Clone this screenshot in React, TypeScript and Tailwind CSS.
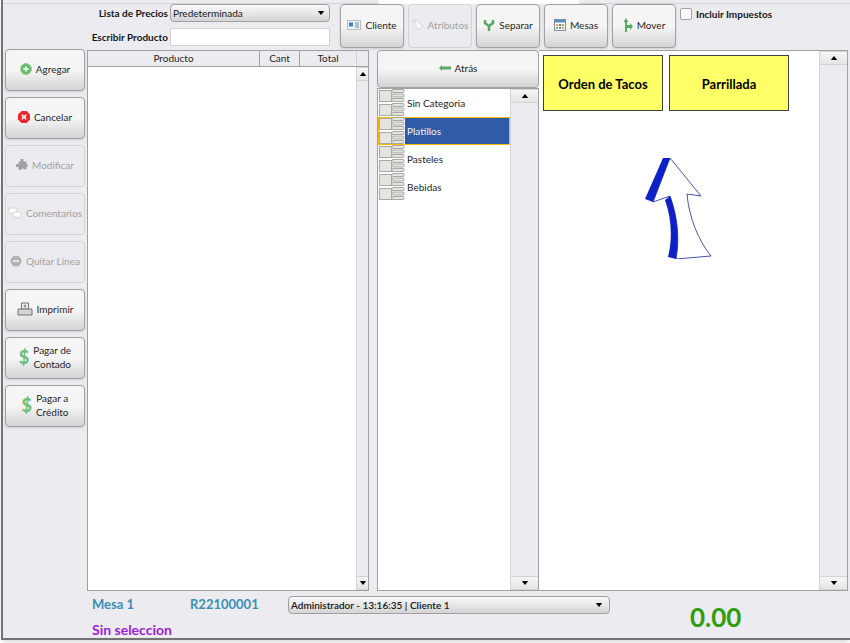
import { ReactNode } from 'react';

function Arrow({ up }: { up?: boolean }) {
  return (
    <svg viewBox="0 0 8 5" className="h-1 w-2 fill-black">
      <path d={up ? 'M0 5 L4 0 L8 5 Z' : 'M0 0 L8 0 L4 5 Z'} />
    </svg>
  );
}

function ScrollBar({ wide }: { wide?: boolean }) {
  const btn = 'flex h-3.5 items-center justify-center bg-gradient-to-b from-neutral-100 to-neutral-200 border-y border-neutral-300';
  return (
    <div className={`flex shrink-0 flex-col justify-between border-l border-neutral-300 bg-[#ecebef] ${wide ? 'w-7' : 'w-3'}`}>
      <div className={btn}>
        <Arrow up />
      </div>
      <div className={btn}>
        <Arrow />
      </div>
    </div>
  );
}

function Dollar() {
  return <span className="text-lg font-black leading-none text-[#6ec07a]">$</span>;
}

const icons: Record<string, ReactNode> = {
  agregar: (
    <svg viewBox="0 0 12 12" className="size-3">
      <circle cx="6" cy="6" r="5.5" fill="#66bb6a" stroke="#9ccc9c" />
      <path d="M6 3.2v5.6M3.2 6h5.6" stroke="#fff" strokeWidth="1.4" />
    </svg>
  ),
  cancelar: (
    <svg viewBox="0 0 12 12" className="size-3">
      <path d="M3.5 0h5L12 3.5v5L8.5 12h-5L0 8.5v-5Z" fill="#e8272f" />
      <path d="M3.8 3.8l4.4 4.4M8.2 3.8l-4.4 4.4" stroke="#fff" strokeWidth="1.6" />
    </svg>
  ),
  modificar: (
    <svg viewBox="0 0 12 12" className="size-3 fill-neutral-400">
      <path d="M4.5 1a1.5 1.5 0 0 1 3 0V2.500h3v3H12v2h-1.500v3h-3V9.500h-2V11H2.500V8H1a1.500 1.500 0 0 1 0-3h1.500V2.500h2Z" />
    </svg>
  ),
  comentarios: (
    <svg viewBox="0 0 14 12" className="h-3 w-3.5 fill-white stroke-neutral-300">
      <path d="M1 1h7a1 1 0 0 1 1 1v3a1 1 0 0 1-1 1H4L2 8V6H1Z" />
      <path d="M6 5h6a1 1 0 0 1 1 1v3a1 1 0 0 1-1 1h-1v1.500L9 10H6a1 1 0 0 1-1-1V6Z" />
    </svg>
  ),
  quitar: (
    <svg viewBox="0 0 12 12" className="size-3">
      <circle cx="6" cy="6" r="5.500" fill="#b4b4b6" />
      <path d="M3 6h6" stroke="#eee" strokeWidth="1.800" />
    </svg>
  ),
  imprimir: (
    <svg viewBox="0 0 16 14" className="h-3.5 w-4 fill-neutral-100 stroke-neutral-500">
      <path d="M4.500 1h7v6h-7Z" />
      <path d="M1 7h14v6H1Z" fill="#d4d4d8" />
      <path d="M8 2.500v3M6.500 4h3" />
    </svg>
  ),
  cliente: (
    <svg viewBox="0 0 14 10" className="h-2.5 w-3.5">
      <rect x="0.500" y="0.500" width="13" height="9" fill="#eef2f7" stroke="#b6bcc6" />
      <rect x="2" y="2.500" width="4" height="4" fill="#3f7fc4" />
      <path d="M8 3h4M8 5h4M8 7h4" stroke="#7a8290" />
    </svg>
  ),
  atributos: (
    <svg viewBox="0 0 12 12" className="size-3 fill-neutral-100 stroke-neutral-300">
      <path d="M1 1h4l6 6-4 4-6-6Z" />
      <circle cx="3.200" cy="3.200" r="0.800" />
    </svg>
  ),
  separar: (
    <svg viewBox="0 0 12 12" className="size-3 fill-none stroke-[#5aa864]" strokeWidth="2.500">
      <path d="M6 12V7L2 4V1M6 7l4-3V1" />
    </svg>
  ),
  mesas: (
    <svg viewBox="0 0 12 12" className="size-3">
      <rect x="0.500" y="0.500" width="11" height="11" fill="#fff" stroke="#7c8aa0" />
      <path d="M1 1h10v2.500H1Z" fill="#5a8fd0" />
      <path d="M2 5h2v2H2Z" fill="#e8a33d" />
      <path d="M5 5h2v2H5Z" fill="#d9534f" />
      <path d="M8 5h2v2H8Z" fill="#6fbf73" />
      <path d="M2 8h2v2H2Z" fill="#6fbf73" />
      <path d="M5 8h2v2H5Z" fill="#5a8fd0" />
      <path d="M8 8h2v2H8Z" fill="#e8a33d" />
    </svg>
  ),
  mover: (
    <svg viewBox="0 0 10 14" className="h-3.5 w-2.500 fill-[#5aa864]">
      <path d="M2 14V4H0.500L3 0l2.500 4H4v3h3V5l3 3.500L7 12v-2H4v4Z" />
    </svg>
  ),
};

type BtnProps = { icon: ReactNode; disabled?: boolean; children: ReactNode; size: string };

function Btn({ icon, disabled, children, size }: BtnProps) {
  return (
    <button
      className={`flex items-center justify-center gap-1 rounded-sm border pb-0.5 text-center leading-3.5 ${size} ${
        disabled
          ? 'border-neutral-300 text-neutral-400'
          : 'border-neutral-400 bg-gradient-to-b from-neutral-100 via-neutral-100 to-neutral-300 text-neutral-800 shadow-sm'
      }`}
    >
      {icon}
      <span>{children}</span>
    </button>
  );
}

function CategoryIcon() {
  return (
    <svg viewBox="0 0 26 28" className="h-7 w-6.5 shrink-0">
      {[1, 15].map((y) => (
        <g key={y} fill="#e4e4e0" stroke="#a8a8a4">
          <rect x="0.500" y={y + 0.500} width="12" height="11" />
          <rect x="13" y={y - 0.500} width="12" height="3" rx="1" />
          <rect x="13" y={y + 4} width="12" height="3" rx="1" />
          <rect x="13" y={y + 8.500} width="12" height="3" rx="1" />
        </g>
      ))}
    </svg>
  );
}

const categories = ['Sin Categoria', 'Platillos', 'Pasteles', 'Bebidas'];

export default function App() {
  return (
    <div
      className="h-[643px] w-[850px] overflow-hidden bg-white text-[10px]"
      style={{ fontFamily: 'Lato, "Open Sans", sans-serif' }}
    >
      <div className="ml-px flex h-[640px] flex-col border-b-2 border-l-2 border-neutral-500 bg-[#ecebef] shadow-md">
        {/* strip of the tabs above */}
        <div className="flex h-1 shrink-0 border-b border-neutral-300">
          <div className="w-94" />
          <div className="-mb-px w-50 bg-white" />
        </div>

        {/* top bar */}
        <div className="flex h-11 shrink-0">
          <div className="flex w-[327px] shrink-0 flex-col items-end gap-1.5">
            <div className="flex items-center gap-0.5">
              <span className="font-bold text-neutral-900">Lista de Precios</span>
              <div className="flex h-4.5 w-40 items-center justify-between rounded-sm border border-neutral-400 bg-gradient-to-b from-neutral-50 to-neutral-300 pl-0.5 pr-1 text-neutral-900">
                Predeterminada
                <Arrow />
              </div>
            </div>
            <div className="flex items-center gap-0.5">
              <span className="font-bold text-neutral-900">Escribir Producto</span>
              <div className="h-4.5 w-40 border border-neutral-300 bg-white" />
            </div>
          </div>
          <div className="ml-2.5 flex gap-1">
            <Btn size="h-11 w-16" icon={icons.cliente}>Cliente</Btn>
            <Btn size="h-11 w-16" icon={icons.atributos} disabled>
              Atributos
            </Btn>
            <Btn size="h-11 w-16" icon={icons.separar}>Separar</Btn>
            <Btn size="h-11 w-16" icon={icons.mesas}>Mesas</Btn>
            <Btn size="h-11 w-16" icon={icons.mover}>Mover</Btn>
          </div>
          <label className="ml-1 flex h-5 items-center gap-1 font-bold text-neutral-900">
            <span className="size-3 rounded-xs border border-neutral-400 bg-neutral-50" />
            Incluir Impuestos
          </label>
        </div>

        {/* main area */}
        <div className="flex min-h-0 flex-1 pb-px pr-0.5 pt-px">
          <div className="ml-0.5 flex w-20 shrink-0 flex-col gap-1.5">
            <Btn size="h-10.5" icon={icons.agregar}>Agregar</Btn>
            <Btn size="h-10.5" icon={icons.cancelar}>Cancelar</Btn>
            <Btn size="h-10.5" icon={icons.modificar} disabled>
              Modificar
            </Btn>
            <Btn size="h-10.5" icon={icons.comentarios} disabled>
              Comentarios
            </Btn>
            <Btn size="h-10.5" icon={icons.quitar} disabled>
              Quitar Linea
            </Btn>
            <Btn size="h-10.5" icon={icons.imprimir}>Imprimir</Btn>
            <Btn size="h-10.5" icon={<Dollar />}>
              Pagar de
              <br />
              Contado
            </Btn>
            <Btn size="h-10.5" icon={<Dollar />}>
              Pagar a
              <br />
              Crédito
            </Btn>
          </div>

          {/* order table */}
          <div className="ml-0.5 mt-px flex w-[282px] shrink-0 flex-col border border-neutral-400 bg-white">
            <div className="flex h-4 shrink-0 border-b border-neutral-400 bg-[#ecebef] text-neutral-800">
              <div className="flex flex-1 items-center justify-center border-r border-neutral-400">Producto</div>
              <div className="flex w-10 items-center justify-center border-r border-neutral-400">Cant</div>
              <div className="flex w-14 items-center justify-center">Total</div>
              <div className="w-3 border-l border-neutral-300" />
            </div>
            <div className="flex min-h-0 flex-1 justify-end">
              <ScrollBar />
            </div>
          </div>

          {/* categories */}
          <div className="ml-2 mt-px flex w-[162px] shrink-0 flex-col">
            <button className="flex h-9.5 shrink-0 items-center justify-center gap-1 rounded-sm border border-neutral-400 bg-gradient-to-b from-neutral-100 via-neutral-100 to-neutral-300 pb-0.5 text-neutral-800">
              <svg viewBox="0 0 12 6" className="h-1.5 w-3 fill-[#5aa864]">
                <path d="M0 3 L3 0 V1.500 H12 V4.500 H3 V6 Z" />
              </svg>
              Atrás
            </button>
            <div className="flex min-h-0 flex-1 border border-neutral-400 bg-white">
              <div className="flex min-w-0 flex-1 flex-col">
                {categories.map((c) => (
                  <div
                    key={c}
                    className={`flex h-7 items-center border text-neutral-800 ${
                      c === 'Platillos' ? 'border-amber-400' : 'border-transparent'
                    }`}
                  >
                    <CategoryIcon />
                    <span
                      className={`flex h-full flex-1 items-center px-0.5 ${
                        c === 'Platillos' ? 'bg-[#2f5ba7] text-neutral-100' : ''
                      }`}
                    >
                      {c}
                    </span>
                  </div>
                ))}
              </div>
              <ScrollBar wide />
            </div>
          </div>

          {/* products */}
          <div className="mt-px flex min-w-0 flex-1 border-y border-r border-neutral-400 bg-white">
            <div className="flex-1 p-1">
              <div className="flex gap-1.5">
                <div className="flex h-14 w-30 items-center justify-center border border-neutral-700 bg-[#ffff66] pt-1 text-[13px] font-bold text-black">
                  Orden de Tacos
                </div>
                <div className="flex h-14 w-30 items-center justify-center border border-neutral-700 bg-[#ffff66] pt-1 text-[13px] font-bold text-black">
                  Parrillada
                </div>
              </div>
              <div className="ml-24.5 mt-11">
                <svg viewBox="-2 -2 72 104" className="h-26 w-18">
                  <path d="M27 1 L58 39 L44 37 C46 60 55 83 68 99 L33 102 C37 80 34 58 27 39 L10 45 Z" fill="#fff" stroke="#4a52b5" />
                  <path d="M20 1 L27 1 L10 45 L2 42 Z" fill="#1020c8" />
                  <path d="M22 43 L27 39 C34 58 37 80 33 102 L25 100 C30 80 28 60 22 43 Z" fill="#1020c8" />
                </svg>
              </div>
            </div>
            <ScrollBar wide />
          </div>
        </div>

        {/* bottom bar */}
        <div className="flex h-11.5 shrink-0 pl-[89px]">
          <div className="flex w-49 shrink-0 flex-col gap-2 pt-1 font-bold leading-4">
            <div className="flex text-[13px]">
              <span className="w-24.5 text-[#3a8fb5]">Mesa 1</span>
              <span className="text-[#3a8fb5]">R22100001</span>
            </div>
            <span className="text-sm text-[#9b1fd6]">Sin seleccion</span>
          </div>
          <div className="pt-1">
            <div className="flex h-4.5 w-[322px] items-center justify-between rounded-sm border border-neutral-400 bg-gradient-to-b from-neutral-50 to-neutral-300 pl-0.5 pr-1.5 font-semibold text-neutral-900">
              Administrador - 13:16:35 | Cliente 1
              <Arrow />
            </div>
          </div>
          <div className="ml-20 pt-3 text-[26px] font-bold leading-none text-[#2f9e0e]">0.00</div>
        </div>
      </div>
    </div>
  );
}
